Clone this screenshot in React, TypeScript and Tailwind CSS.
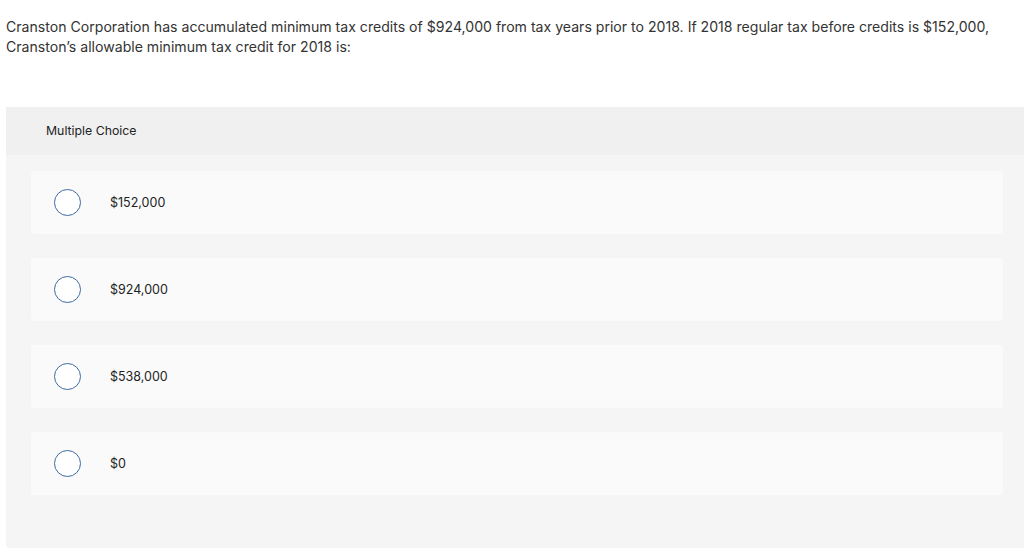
const options = ['$152,000', '$924,000', '$538,000', '$0'];

function Radio() {
  return <span className="block w-[27px] h-[27px] rounded-full border border-[#3d6aa3] bg-white shrink-0" />;
}

export default function App() {
  return (
    <div className="w-[1024px] h-[548px] bg-white overflow-hidden text-[#2b2b2b]" style={{ fontFamily: 'Inter, Arial, sans-serif' }}>
      {/* Question */}
      <p className="pt-[17px] pl-[6px] text-[14.1px] leading-[20px] text-[#333] whitespace-nowrap">
        Cranston Corporation has accumulated minimum tax credits of $924,000 from tax years prior to 2018. If 2018 regular tax before credits is $152,000,
        <br />
        Cranston’s allowable minimum tax credit for 2018 is:
      </p>

      {/* Answer panel */}
      <div className="mt-[50px] ml-[6px] h-[441px] bg-[#f5f5f5] rounded-bl-[4px]">
        <div className="h-[48px] bg-[#f0f0f0] flex items-center pl-[40px] text-[12.3px] text-[#222]">
          Multiple Choice
        </div>
        <div className="flex flex-col gap-[24px] pt-[16px] pl-[25px] w-[997px]">
          {options.map((o) => (
            <div key={o} className="h-[63px] bg-[#fafafa] rounded-[3px] flex items-center pl-[23px]">
              <Radio />
              <span className="ml-[29px] pt-[2px] text-[12.5px] text-[#222]">{o}</span>
            </div>
          ))}
        </div>
      </div>
    </div>
  );
}
